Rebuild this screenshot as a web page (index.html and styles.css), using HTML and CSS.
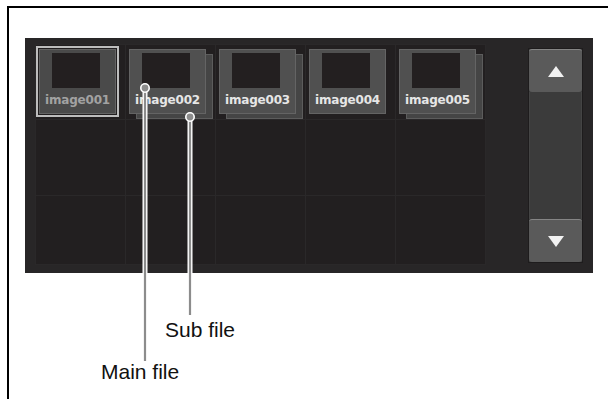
FILE: index.html
```html
<!DOCTYPE html>
<html lang="en">
<head>
  <meta charset="UTF-8">
  <title>Image file list</title>
  <link rel="stylesheet" href="styles.css">
</head>
<body>
  <div class="frame">
    <div class="panel">
      <div class="grid">
        <div class="cell">
          <div class="thumb selected">
            <div class="pic"></div>
            <div class="name">image001</div>
          </div>
        </div>
        <div class="cell">
          <div class="thumb stacked">
            <div class="pic"></div>
            <div class="name">image002</div>
          </div>
        </div>
        <div class="cell">
          <div class="thumb stacked">
            <div class="pic"></div>
            <div class="name">image003</div>
          </div>
        </div>
        <div class="cell">
          <div class="thumb">
            <div class="pic"></div>
            <div class="name">image004</div>
          </div>
        </div>
        <div class="cell">
          <div class="thumb stacked">
            <div class="pic"></div>
            <div class="name">image005</div>
          </div>
        </div>
        <div class="cell"></div>
        <div class="cell"></div>
        <div class="cell"></div>
        <div class="cell"></div>
        <div class="cell"></div>
        <div class="cell"></div>
        <div class="cell"></div>
        <div class="cell"></div>
        <div class="cell"></div>
        <div class="cell"></div>
      </div>

      <div class="scrollbar">
        <div class="scroll-btn"><span class="arrow up"></span></div>
        <div class="track"></div>
        <div class="scroll-btn"><span class="arrow down"></span></div>
      </div>
    </div>
  </div>

  <!-- callouts -->
  <svg class="callouts" width="608" height="399" viewBox="0 0 608 399">
    <line x1="145" y1="88" x2="145" y2="361" stroke="#fff" stroke-width="5"/>
    <line x1="145" y1="88" x2="145" y2="361" stroke="#8c8c8c" stroke-width="2.2"/>
    <circle cx="145" cy="88" r="4.2" fill="#8c8c8c" stroke="#fff" stroke-width="1.6"/>
    <line x1="190" y1="117" x2="190" y2="315" stroke="#fff" stroke-width="5"/>
    <line x1="190" y1="117" x2="190" y2="315" stroke="#8c8c8c" stroke-width="2.2"/>
    <circle cx="190" cy="117" r="4.2" fill="#8c8c8c" stroke="#fff" stroke-width="1.6"/>
  </svg>
  <span class="label sub">Sub file</span>
  <span class="label main">Main file</span>
</body>
</html>
```

FILE: styles.css
```css
body {
  margin: 0;
  background: #fff;
  font-family: "Liberation Sans", Arial, sans-serif;
}
.frame {
  margin: 6px 0 0 7px;
  height: 393px;
  border-top: 2px solid #000;
  border-left: 2px solid #000;
  padding: 30px 0 0 16px;
  box-sizing: border-box;
}
.panel {
  width: 568px;
  height: 235px;
  background: #282627;
  display: flex;
  align-items: flex-start;
  padding: 6px 0 0 10px;
  box-sizing: border-box;
}
.grid {
  display: grid;
  grid-template-columns: repeat(5, 89px);
  grid-template-rows: 74px 75px 68px;
  gap: 1px;
  padding: 1px;
  background: #2a2829;
}
.cell {
  position: relative;
  z-index: 0;
  background: #221f20;
  padding: 4px 0 0 3px;
  box-sizing: border-box;
}
.thumb {
  position: relative;
  width: 77px;
  height: 65px;
  background: #505050;
  border: 1px solid #646464;
  box-sizing: border-box;
  padding: 3px 0 0 12px;
}
.thumb.selected {
  outline: 2px solid #bdbdbd;
  outline-offset: 1px;
  background: #4a4a4a;
}
.thumb.stacked::before {
  content: "";
  position: absolute;
  left: 6px;
  top: 4px;
  width: 77px;
  height: 65px;
  background: #454545;
  border: 1px solid #5c5c5c;
  box-sizing: border-box;
  z-index: -1;
}
.pic {
  width: 48px;
  height: 35px;
  background: #231f20;
}
.name {
  margin: 3px 0 0 -12px;
  width: 75px;
  text-align: center;
  font-family: "DejaVu Sans", sans-serif;
  font-weight: bold;
  font-size: 12px;
  line-height: 18px;
  color: #e6e6e6;
  letter-spacing: -0.2px;
}
.selected .name {
  color: #a2a2a2;
}
.scrollbar {
  margin: 5px 0 0 43px;
  width: 53px;
  height: 213px;
  display: flex;
  flex-direction: column;
  background: #3b3b3b;
  box-shadow: 0 0 0 1px #1e1c1d;
}
.scroll-btn {
  height: 43px;
  background: #5a5a5a;
  border-top: 1px solid #858585;
  border-radius: 3px;
  box-sizing: border-box;
  display: flex;
  align-items: center;
  justify-content: center;
}
.track {
  flex: 1;
  border-left: 1px solid #444;
  border-right: 1px solid #444;
}
.arrow {
  width: 0;
  height: 0;
  border-left: 8px solid transparent;
  border-right: 8px solid transparent;
}
.arrow.up {
  border-bottom: 11px solid #f2f2f2;
}
.arrow.down {
  border-top: 11px solid #f2f2f2;
}
.callouts {
  position: absolute;
  left: 0;
  top: 0;
  pointer-events: none;
}
.label {
  position: absolute;
  font-size: 21px;
  line-height: 24px;
  color: #111;
}
.label.sub {
  left: 165px;
  top: 318px;
}
.label.main {
  left: 101px;
  top: 360px;
}
```
